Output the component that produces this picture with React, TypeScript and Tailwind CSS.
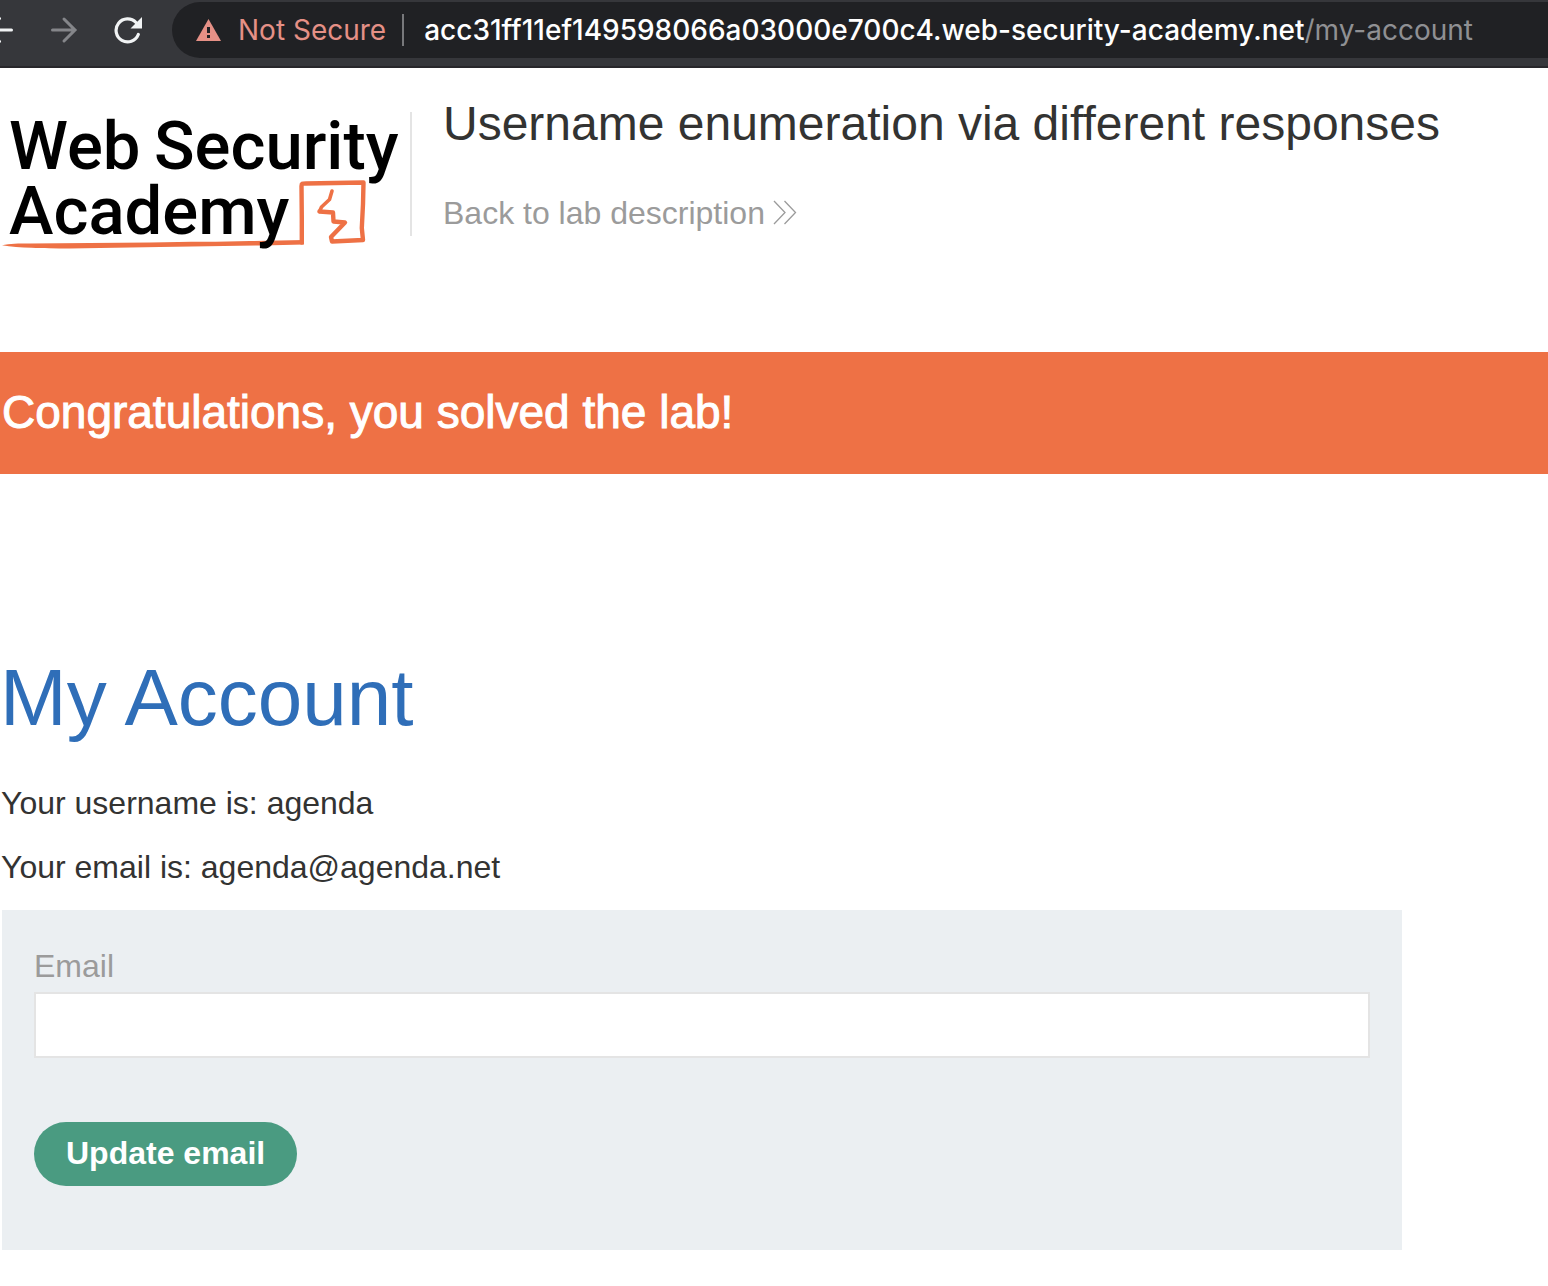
function BackIcon() {
  return (
    <svg viewBox="0 0 28 28" className="h-7 w-7" fill="none" stroke="#f1f3f4" strokeWidth="3" strokeLinecap="round" aria-hidden="true">
      <path d="M25.500 14H3M13.500 2.500L2.500 14L13.500 25.500" />
    </svg>
  );
}

function ForwardIcon() {
  return (
    <svg viewBox="0 0 28 28" className="h-7 w-7" fill="none" stroke="#85868a" strokeWidth="3" strokeLinecap="round" aria-hidden="true">
      <path d="M2.500 14H24M14 3L25 14L14 25" />
    </svg>
  );
}

function ReloadIcon() {
  return (
    <svg viewBox="0 0 28 28" className="h-7 w-7" aria-hidden="true">
      <path d="M24.300 18.500A11.500 11.500 0 1 1 22 6.500" fill="none" stroke="#f1f3f4" strokeWidth="3.200" strokeLinecap="round" />
      <path d="M28 1V12.500H16.500Z" fill="#f1f3f4" />
    </svg>
  );
}

function WarningIcon() {
  return (
    <svg viewBox="0 0 26 22" className="h-[22px] w-[26px]" aria-hidden="true">
      <path d="M12.500 0L25 22H0Z" fill="#e59086" />
      <path d="M11 8H14V14H11ZM11 16H14V19H11Z" fill="#202124" />
    </svg>
  );
}

function Logo() {
  return (
    <svg viewBox="0 0 410 160" className="h-40 w-[410px] shrink-0" role="img" aria-label="Web Security Academy">
      <g fill="none" stroke="#ee7145" strokeLinejoin="round" strokeLinecap="round">
        <path d="M301.800 142.500V118L301.500 86C301.500 83.500 302 83.500 306 83.500L363.500 82.500L363 104L361.800 128L363 140L332 141.500L331 137L345 122.500L333.500 121.500L333 112.500L319.500 111.500" strokeWidth="4.400" />
        <path d="M319.500 111.500L321.500 107L329.500 99.500L332 91" strokeWidth="3.600" />
      </g>
      <path d="M2 145.300C10 143.500 18 143.500 30 143.500L150 142.500C190 141.500 220 142 250 141L304 140V144.500L262 145.500L160 147L70 148.500C40 148.500 20 148 2 145.300Z" fill="#ee7145" />
      <g className="font-['Roboto',sans-serif] text-[67px] font-medium" fill="#000">
        <text x="9" y="69">Web</text>
        <text x="154" y="69">Security</text>
        <text x="9" y="134">Academy</text>
      </g>
    </svg>
  );
}

function BrowserBar() {
  return (
    <div className="flex h-[68px] items-start overflow-hidden border-b-2 border-[#28272b] bg-[#36373b] pt-0.5 font-['Inter',sans-serif] text-[28px] leading-[56px]">
      <nav aria-label="Browser" className="-ml-3.5 flex h-14 shrink-0 items-center gap-9 pr-[30px]">
        <button type="button" aria-label="Back"><BackIcon /></button>
        <button type="button" aria-label="Forward"><ForwardIcon /></button>
        <button type="button" aria-label="Reload"><ReloadIcon /></button>
      </nav>
      <div className="flex h-14 flex-1 items-center whitespace-nowrap rounded-l-full bg-[#202124] pl-6 text-white">
        <WarningIcon />
        <span className="ml-4 text-[#e59086]">Not Secure</span>
        <span className="mx-4 h-8 w-0.5 bg-[#77787b]" />
        <span className="ml-1 font-medium">acc31ff11ef149598066a03000e700c4.web-security-academy.net</span>
        <span className="text-[#8f9093]">/my-account</span>
      </div>
    </div>
  );
}

export default function App() {
  return (
    <div className="min-h-screen overflow-x-hidden bg-white font-['Liberation_Sans',Arial,sans-serif] text-[32px] leading-[40px] text-[#333332]">
      <BrowserBar />
      <header className="flex h-[284px] items-start pt-8">
        <Logo />
        <div className="mt-3 h-[124px] w-0.5 shrink-0 bg-[#e4e4e4]" />
        <div className="ml-[31px]">
          <h1 className="text-[48px] leading-[48px]">Username enumeration via different responses</h1>
          <a href="#lab" className="mt-[45px] flex items-center gap-2 text-[#9b9b9b]">
            Back to lab description
            <svg viewBox="0 0 24 26" className="h-[26px] w-6" fill="none" stroke="#9b9b9b" strokeWidth="1.300" aria-hidden="true">
              <path d="M1 1L12 12.500L1 24M11.500 1L22.500 12.500L11.500 24" />
            </svg>
          </a>
        </div>
      </header>
      <section className="flex h-[122px] items-center bg-[#ee7145] pl-0.5 text-[46px] text-white">
        <p className="-mt-0.5 [-webkit-text-stroke:1px_white]">Congratulations, you solved the lab!</p>
      </section>
      <main className="pt-[180px]">
        <h2 className="text-[80px] leading-[88px] text-[#2f6eb8]">My Account</h2>
        <p className="ml-px mt-[41px]">Your username is: agenda</p>
        <p className="ml-px mt-6">Your email is: agenda@agenda.net</p>
        <form className="ml-0.5 mt-[23px] max-w-[1400px] bg-[#ebeff2] px-8 pb-16 pt-9" onSubmit={(e) => e.preventDefault()}>
          <label htmlFor="email" className="block text-[#9b9b9b]">Email</label>
          <input id="email" type="email" className="mt-1.5 block h-[66px] w-full border-2 border-[#e4e4e4] bg-white px-3 outline-none" />
          <button type="submit" className="mt-16 h-16 rounded-full bg-[#4a9b81] px-8 pb-0.5 font-bold text-white">Update email</button>
        </form>
      </main>
    </div>
  );
}
